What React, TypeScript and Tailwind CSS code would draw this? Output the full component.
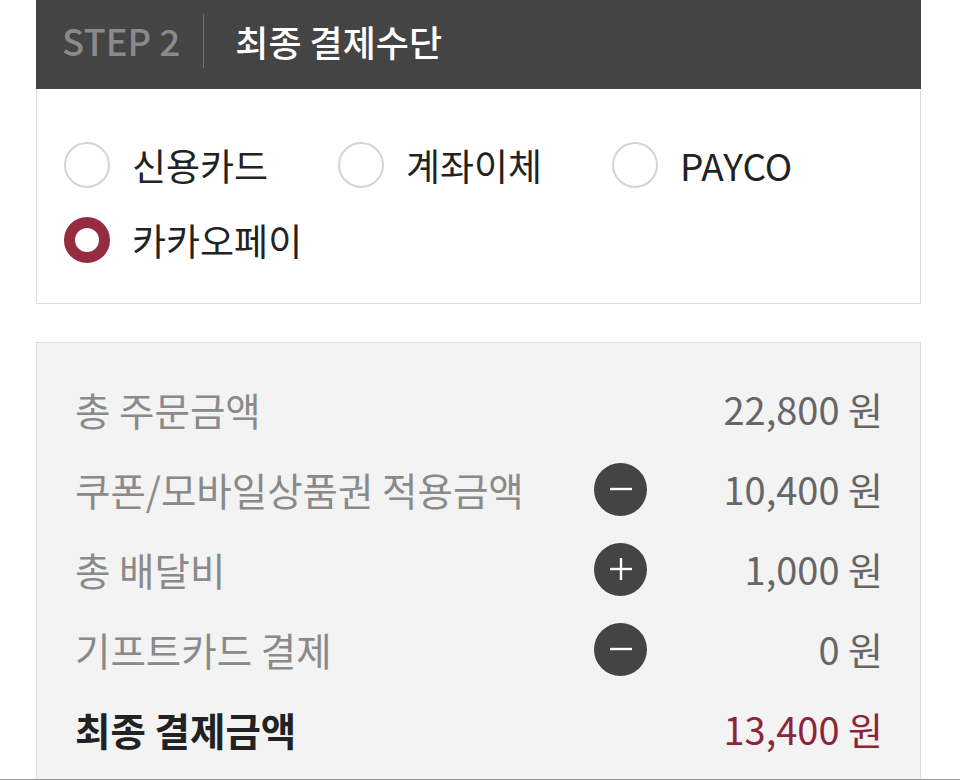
import React from "react";

const FONT = { fontFamily: '"Noto Sans CJK KR", "Noto Sans", sans-serif' };

function Radio({ checked, label }: { checked?: boolean; label: string }) {
  return (
    <div className="flex items-center h-[46px]">
      {checked ? (
        <div className="w-[46px] h-[46px] shrink-0 rounded-full border-[11px] border-[#952c40] bg-white box-border" />
      ) : (
        <div className="w-[46px] h-[46px] shrink-0 rounded-full border-2 border-[#d4d4d4] bg-white box-border" />
      )}
      <span className="ml-[22px] text-[37px] leading-none text-[#222] whitespace-nowrap">{label}</span>
    </div>
  );
}

function SignIcon({ plus }: { plus?: boolean }) {
  return (
    <div className="w-[53px] h-[53px] rounded-full bg-[#444] flex items-center justify-center">
      <svg width="24" height="24" viewBox="0 0 24 24">
        <line x1="1" y1="12" x2="23" y2="12" stroke="#fff" strokeWidth="2.4" />
        {plus && <line x1="12" y1="1" x2="12" y2="23" stroke="#fff" strokeWidth="2.4" />}
      </svg>
    </div>
  );
}

function Row({
  label,
  amount,
  sign,
  final,
}: {
  label: string;
  amount: string;
  sign?: "plus" | "minus";
  final?: boolean;
}) {
  return (
    <div className="flex items-center h-[80px]">
      <span
        className={
          "flex-1 text-[38.5px] leading-none whitespace-nowrap " +
          (final ? "font-bold text-[#222]" : "text-[#8a8a8a]")
        }
      >
        {label}
      </span>
      <div className="w-[53px] flex justify-center">
        {sign && <SignIcon plus={sign === "plus"} />}
      </div>
      <span
        className={
          "w-[236px] text-right text-[38px] leading-none whitespace-nowrap " +
          (final ? "text-[#8c2539]" : "text-[#666]")
        }
      >
        {amount}
      </span>
    </div>
  );
}

export default function App() {
  return (
    <div className="w-[960px] h-[780px] bg-white flex flex-col overflow-hidden" style={FONT}>
      <div className="ml-[36px] w-[885px] flex-1 flex flex-col">
        <div className="h-[89px] bg-[#444] flex items-center pl-[26px] pb-[7px]">
          <span className="text-[36.5px] font-medium text-[#8a8a8a] leading-none">STEP 2</span>
          <div className="w-px h-[54px] bg-[#6e6e6e] ml-[23px] mr-[31px]" />
          <span className="text-[36px] font-medium text-white leading-none">최종 결제수단</span>
        </div>
        <div className="h-[215px] border border-t-0 border-[#dcdcdc] pt-[53px] pl-[27px]">
          <div className="grid grid-cols-[274px_274px_274px] gap-y-[29px]">
            <Radio label="신용카드" />
            <Radio label="계좌이체" />
            <Radio label="PAYCO" />
            <Radio label="카카오페이" checked />
          </div>
        </div>
        <div className="mt-[38px] flex-1 bg-[#f3f3f3] border border-b-0 border-[#dcdcdc] pt-[26px] pl-[38px] pr-[37px]">
          <Row label="총 주문금액" amount="22,800 원" />
          <Row label="쿠폰/모바일상품권 적용금액" amount="10,400 원" sign="minus" />
          <Row label="총 배달비" amount="1,000 원" sign="plus" />
          <Row label="기프트카드 결제" amount="0 원" sign="minus" />
          <Row label="최종 결제금액" amount="13,400 원" final />
        </div>
      </div>
      <div className="h-px w-full bg-[#9a9a9a]" />
    </div>
  );
}
